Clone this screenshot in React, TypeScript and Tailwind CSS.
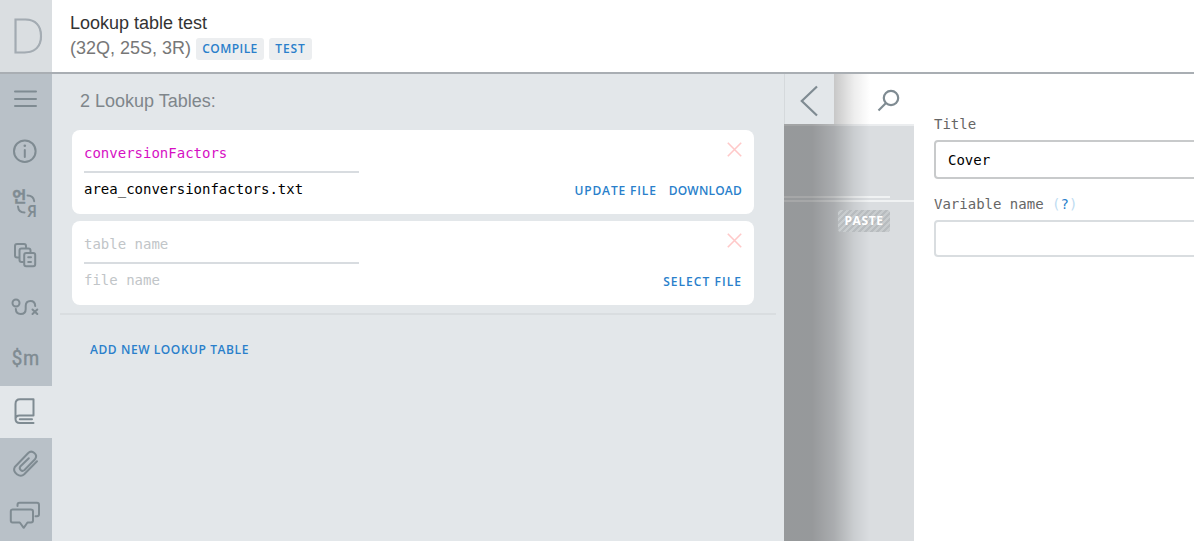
import type { ReactNode } from "react";

const mono = "font-['DejaVu_Sans_Mono',monospace] text-[14px]";
const action =
  "font-['Open_Sans',sans-serif] text-[12px] leading-[22px] font-semibold text-[#2a7fcb] whitespace-nowrap";

function Icon({ children, active = false }: { children: ReactNode; active?: boolean }) {
  return (
    <button className={`block h-[52px] w-[52px] shrink-0 ${active ? "bg-[#e3e7ea]" : ""}`}>
      <svg
        width="52"
        height="52"
        viewBox="0 0 52 52"
        fill="none"
        stroke="#7f8b92"
        strokeWidth="2"
        strokeLinecap="round"
        strokeLinejoin="round"
      >
        {children}
      </svg>
    </button>
  );
}

function Sidebar() {
  return (
    <nav className="flex w-[52px] shrink-0 flex-col overflow-hidden bg-[#b9c1c8]">
      <Icon>
        <path d="M15 17.5H36M15 25H36M15 32H36" />
      </Icon>
      <Icon>
        <circle cx="24.8" cy="25.2" r="10.8" />
        <path d="M24.8 24V31" />
        <circle cx="24.8" cy="19.8" r="1.3" fill="#7f8b92" stroke="none" />
      </Icon>
      <Icon>
        <text x="12.2" y="24" textLength="14" lengthAdjust="spacingAndGlyphs" fontSize="14.5" fontWeight="700" fill="#7f8b92" stroke="#7f8b92" strokeWidth="0.4" className="font-['Noto_Sans_CJK_KR',sans-serif]">언</text>
        <path d="M27.5 17.5Q33.5 17.5 34.2 23.2M18 28.5Q18.5 34.5 24.5 34.5" />
        <text x="27" y="38.8" textLength="10" lengthAdjust="spacingAndGlyphs" fontSize="16.5" fontWeight="600" fill="#7f8b92" stroke="none" className="font-['Noto_Sans',sans-serif]">Я</text>
      </Icon>
      <Icon>
        <path d="M18.5 27.5H17Q15 27.5 15 25.5V16Q15 14 17 14H24Q26 14 26 16V17.5" />
        <path d="M23 32H21.5Q19.5 32 19.5 30V20.5Q19.5 18.5 21.5 18.5H28.5Q30.5 18.5 30.5 20.5V22" />
        <rect x="24.2" y="22.9" width="11" height="13.400" rx="2" />
        <path d="M28.2 27.3H31M28.2 32H31" />
      </Icon>
      <Icon>
        <circle cx="16" cy="21" r="3.5" />
        <path d="M15.800 27Q16 32 20.700 32Q25.700 32 25.700 27V24Q25.700 19 30.500 19Q35 19 35.200 24M32.500 27.500L37.300 32M37.300 27.500L32.500 32" />
      </Icon>
      <Icon>
        <text x="11.700" y="31" textLength="10.500" lengthAdjust="spacingAndGlyphs" fontSize="20" fontWeight="400" fill="#7f8b92" stroke="#7f8b92" strokeWidth="0.5" className="font-['Roboto',sans-serif]">$</text>
        <text x="23.300" y="31" textLength="15.800" lengthAdjust="spacingAndGlyphs" fontSize="20" fontWeight="400" fill="#7f8b92" stroke="#7f8b92" strokeWidth="0.5" className="font-['Roboto',sans-serif]">m</text>
      </Icon>
      <Icon active>
        <path d="M33.500 29.500V13.300H20Q15.500 13.300 15.500 18V33M33.500 29.500H19.500Q15.500 29.500 15.500 33Q15.500 37 20 37H33.500M19.800 33.200H32" />
      </Icon>
      <Icon>
        <path d="M37 23.200L24.200 36.300C20 40.300 12 34.500 14.800 29L28 15.200C32 11.200 38.500 16.500 35 21.200L24.500 32C21.800 34.300 18.300 31 20.500 28.200L28.800 20.200" />
      </Icon>
      <Icon>
        <path d="M12.500 19.500H31Q33 19.500 33 21.500V30.500Q33 32.500 31 32.500H27.500L23.700 37.800L19.800 32.500H12.500Q10.800 32.500 10.800 30.500V21.500Q10.800 19.500 12.500 19.500Z" />
        <path d="M17.500 16V15Q17.500 12.800 19.500 12.800H37Q39 12.800 39 15V24.200Q39 26.200 37 26.200H35.500" />
      </Icon>
    </nav>
  );
}

function Header() {
  return (
    <header className="flex h-[74px] shrink-0 border-b-2 border-[#a9aeb3] bg-white">
      <div className="h-[72px] w-[52px] bg-[#dadee1]">
        <svg width="52" height="72" viewBox="0 0 52 72">
          <text x="9.300" y="53" fontSize="46.500" fontWeight="100" textLength="36" lengthAdjust="spacingAndGlyphs" fill="#a3abb2" stroke="#a3abb2" strokeWidth="0.900" className="font-['Inter',sans-serif]">D</text>
        </svg>
      </div>
      <div className="pt-[11px] pl-[18px] font-['Liberation_Sans',sans-serif] text-[18px]">
        <div className="leading-[24px] text-[#333]">Lookup table test</div>
        <div className="flex pt-[1px] leading-[24px] text-[#777]">
          <span className="w-[126px] whitespace-nowrap">(32Q, 25S, 3R)</span>
          <button className={`${action} mt-[2px] h-[22px] w-[68px] rounded-[3px] bg-[#eceef0] tracking-[0.45px]`}>COMPILE</button>
          <button className={`${action} mt-[2px] ml-[5px] h-[22px] w-[43px] rounded-[3px] bg-[#eceef0] tracking-[0.9px]`}>TEST</button>
        </div>
      </div>
    </header>
  );
}

type CardAction = { label: string; tracking: string };

function TableCard({ name, file, filled, actions }: { name: string; file: string; filled: boolean; actions: CardAction[] }) {
  return (
    <div className="flex h-[84px] justify-between rounded-[8px] bg-white px-[12px]">
      <div className="w-[275px]">
        <div className={`${mono} h-[43px] border-b-2 border-[#d8dce0] pt-[13px] leading-[20px] ${filled ? "text-[#d60fc4]" : "text-[#c1c5c8]"}`}>{name}</div>
        <div className={`${mono} pt-[6px] leading-[20px] ${filled ? "text-black" : "text-[#c1c5c8]"}`}>{file}</div>
      </div>
      <div className="flex flex-col items-end">
        <svg className="mt-[12px]" width="15" height="15" viewBox="0 0 15 15" stroke="#ffc9c9" strokeWidth="1.6">
          <path d="M0.800 0.800L14.200 14.200M14.200 0.800L0.800 14.200" />
        </svg>
        <div className="mt-[23px] flex gap-[12px]">
          {actions.map((a) => (
            <button key={a.label} className={`${action} ${a.tracking}`}>{a.label}</button>
          ))}
        </div>
      </div>
    </div>
  );
}

function LookupPanel() {
  return (
    <main className="w-[732px] shrink-0 bg-[#e3e7ea]">
      <h1 className="pt-[15px] pl-[28px] font-['Liberation_Sans',sans-serif] text-[18px] leading-[24px] text-[#7f868b]">2 Lookup Tables:</h1>
      <div className="ml-[20px] flex w-[682px] flex-col gap-[7px] pt-[17px]">
        <TableCard
          name="conversionFactors"
          file="area_conversionfactors.txt"
          filled
          actions={[
            { label: "UPDATE FILE", tracking: "tracking-[0.85px]" },
            { label: "DOWNLOAD", tracking: "tracking-[0.2px]" },
          ]}
        />
        <TableCard
          name="table name"
          file="file name"
          filled={false}
          actions={[{ label: "SELECT FILE", tracking: "tracking-[1.05px]" }]}
        />
      </div>
      <div className="mt-[8px] ml-[8px] h-[2px] w-[716px] bg-[#d9dde0]" />
      <button className={`${action} mt-[24px] ml-[38px] block tracking-[0.57px]`}>ADD NEW LOOKUP TABLE</button>
    </main>
  );
}

function TreePanel() {
  return (
    <section className="relative flex w-[130px] shrink-0 flex-col bg-[#dadde0]">
      <div className="flex h-[50px] shrink-0 bg-white">
        <button className="relative z-10 h-[50px] w-[50px] border-l border-[#d5d9dc] bg-[#e3e7ea]">
          <svg width="49" height="50" viewBox="0 0 49 50" fill="none" stroke="#7f8b92" strokeWidth="2.2">
            <path d="M32 12.500L16.800 27L32 41.500" />
          </svg>
        </button>
        <svg className="ml-[42px]" width="30" height="50" viewBox="0 0 30 50" fill="none" stroke="#7f8b92" strokeWidth="2.200">
          <circle cx="15" cy="24" r="7.200" />
          <path d="M10 29L2.500 36.500" />
        </svg>
      </div>
      <div className="h-[2px] bg-[#ebedef]" />
      <div className="mt-[70px] h-[2px] w-[106px] bg-[#f0f2f3]" />
      <div className="mt-[2px] h-[2px] bg-[#f0f2f3]" />
      <div className="relative z-10 mt-[8px] ml-[54px] h-[22px] w-[52px] rounded-[3px] bg-[repeating-linear-gradient(135deg,#b8bcbf_0px,#b8bcbf_2.1px,#c8ccce_2.1px,#c8ccce_4.2px)] text-center font-['Open_Sans',sans-serif] text-[12px] leading-[21px] font-bold tracking-[0.6px] text-white">
        PASTE
      </div>
      <div className="pointer-events-none absolute inset-0 bg-[linear-gradient(to_right,rgba(0,0,0,0.31)_0px,rgba(0,0,0,0.31)_28px,rgba(0,0,0,0.22)_50px,rgba(0,0,0,0.07)_70px,rgba(0,0,0,0)_86px)]" />
    </section>
  );
}

function DetailsForm() {
  return (
    <section className="grow overflow-hidden bg-white pl-[20px]">
      <label className={`${mono} block pt-[40px] leading-[20px] text-[#666]`}>Title</label>
      <div className={`${mono} mt-[6px] h-[39px] w-[300px] rounded-[4px] border-2 border-[#c8cacb] pl-[12px] leading-[36px] text-black`}>Cover</div>
      <label className={`${mono} block pt-[15px] leading-[20px] text-[#666]`}>
        Variable name <span className="text-[#bedcf2]">(<span className="text-[#2a7fcb]">?</span>)</span>
      </label>
      <div className="mt-[6px] h-[37px] w-[300px] rounded-[4px] border-2 border-[#d9dde0]" />
    </section>
  );
}

export default function App() {
  return (
    <div className="flex h-[541px] w-[1194px] flex-col overflow-hidden bg-white">
      <Header />
      <div className="flex min-h-0 grow">
        <Sidebar />
        <LookupPanel />
        <TreePanel />
        <DetailsForm />
      </div>
    </div>
  );
}
